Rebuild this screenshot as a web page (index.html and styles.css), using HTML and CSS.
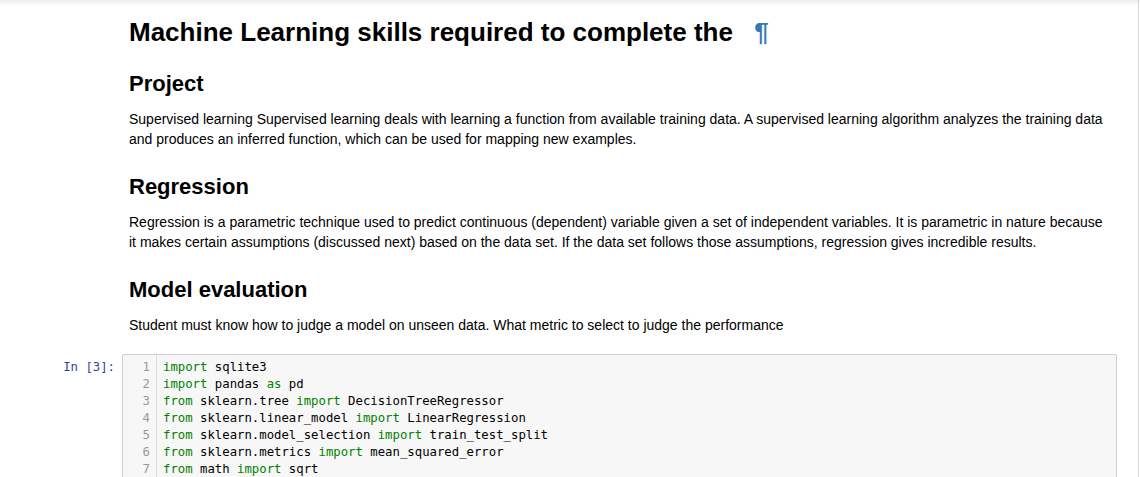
FILE: index.html
```html
<!DOCTYPE html>
<html>
<head>
<meta charset="utf-8">
<link rel="stylesheet" href="styles.css">
</head>
<body>
<div class="notebook">
  <div class="cell text-cell">
    <div class="prompt"></div>
    <div class="inner rendered">
      <h1 class="h1">Machine Learning skills required to complete the <a class="anchor" href="#">¶</a></h1>
      <h2 class="h2 first">Project</h2>
      <p class="para">Supervised learning Supervised learning deals with learning a function from available training data. A supervised learning algorithm analyzes the training data and produces an inferred function, which can be used for mapping new examples.</p>
      <h2 class="h2">Regression</h2>
      <p class="para">Regression is a parametric technique used to predict continuous (dependent) variable given a set of independent variables. It is parametric in nature because it makes certain assumptions (discussed next) based on the data set. If the data set follows those assumptions, regression gives incredible results.</p>
      <h2 class="h2">Model evaluation</h2>
      <p class="para">Student must know how to judge a model on unseen data. What metric to select to judge the performance</p>
    </div>
  </div>
  <div class="cell code-cell">
    <div class="prompt in-prompt">In&nbsp;[3]:</div>
    <div class="code-box">
      <div class="gutter">
        <div>1</div><div>2</div><div>3</div><div>4</div><div>5</div><div>6</div><div>7</div>
      </div>
      <div class="code">
        <div class="line"><span class="kw">import</span> sqlite3</div>
        <div class="line"><span class="kw">import</span> pandas <span class="kw">as</span> pd</div>
        <div class="line"><span class="kw">from</span> sklearn.tree <span class="kw">import</span> DecisionTreeRegressor</div>
        <div class="line"><span class="kw">from</span> sklearn.linear_model <span class="kw">import</span> LinearRegression</div>
        <div class="line"><span class="kw">from</span> sklearn.model_selection <span class="kw">import</span> train_test_split</div>
        <div class="line"><span class="kw">from</span> sklearn.metrics <span class="kw">import</span> mean_squared_error</div>
        <div class="line"><span class="kw">from</span> math <span class="kw">import</span> sqrt</div>
      </div>
    </div>
  </div>
</div>
</body>
</html>
```
FILE: styles.css
```css
html, body {
  margin: 0;
  padding: 0;
  background: #fff;
  height: 100%;
  overflow: hidden;
}
body {
  font-family: "Liberation Sans", Arial, sans-serif;
  color: #000;
  box-shadow: inset 0 7px 6px -6px rgba(0,0,0,0.12);
}
.notebook {
  width: 1139px;
  height: 477px;
  border-right: 1px solid #d9d9d9;
  box-sizing: border-box;
}
.cell {
  display: flex;
}
.prompt {
  width: 122px;
  flex: none;
}
.inner {
  width: 995px;
  padding: 0 7px;
  box-sizing: border-box;
}
.h1 {
  font-size: 26px;
  line-height: 31px;
  font-weight: bold;
  margin: 0;
  padding-top: 17px;
}
.anchor {
  color: #337ab7;
  text-decoration: none;
  padding-left: 14px;
}
.h2 {
  font-size: 22px;
  line-height: 26px;
  font-weight: bold;
  margin: 25px 0 0;
}
.h2.first {
  margin-top: 23px;
}
.para {
  font-size: 14px;
  line-height: 20px;
  margin: 12px 0 0;
}
.code-cell {
  margin-top: 19px;
}
.in-prompt {
  font-family: "DejaVu Sans Mono", monospace;
  font-size: 12.3px;
  color: #303F9F;
  text-align: right;
  box-sizing: border-box;
  padding: 5px 7px 0 0;
  line-height: 17px;
}
.code-box {
  width: 995px;
  height: 140px;
  background: #f7f7f7;
  border: 1px solid #cfcfcf;
  border-radius: 2px;
  box-sizing: border-box;
  display: flex;
  font-family: "DejaVu Sans Mono", monospace;
  font-size: 12.3px;
  line-height: 17px;
}
.gutter {
  width: 34px;
  border-right: 1px solid #ddd;
  color: #999;
  text-align: right;
  padding: 4px 6px 0 0;
  box-sizing: border-box;
  flex: none;
}
.code {
  padding: 4px 0 0 6px;
  color: #000;
}
.line {
  white-space: pre;
}
.kw {
  color: #008000;
}
```
